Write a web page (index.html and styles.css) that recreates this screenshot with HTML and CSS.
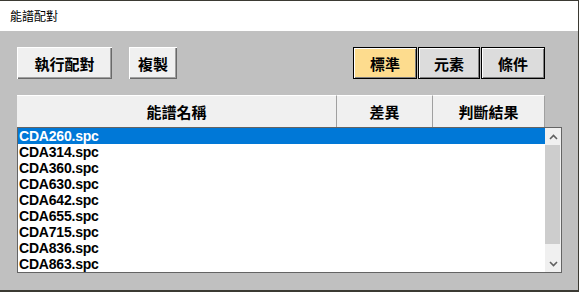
FILE: index.html
```html
<html>
<head>
  <title>能譜配對</title>
  <link rel="stylesheet" href="styles.css">
</head>
<body>
  <div class="window">
    <div class="titlebar">能譜配對</div>
    <div class="client">
      <div class="toolbar">
        <button class="btn btn-run">執行配對</button>
        <button class="btn btn-copy">複製</button>
        <div class="mode-group">
          <button class="mode mode-active">標準</button>
          <button class="mode mode-elem">元素</button>
          <button class="mode">條件</button>
        </div>
      </div>

      <div class="grid-header">
        <div class="col col-name">能譜名稱</div>
        <div class="col col-diff">差異</div>
        <div class="col col-result">判斷結果</div>
      </div>

      <div class="list">
        <div class="rows">
          <div class="row selected">CDA260.spc</div>
          <div class="row">CDA314.spc</div>
          <div class="row">CDA360.spc</div>
          <div class="row">CDA630.spc</div>
          <div class="row">CDA642.spc</div>
          <div class="row">CDA655.spc</div>
          <div class="row">CDA715.spc</div>
          <div class="row">CDA836.spc</div>
          <div class="row">CDA863.spc</div>
        </div>
        <div class="scrollbar">
          <div class="arrow">
            <svg width="9" height="6" viewBox="0 0 9 6"><path d="M1 5 L4.5 1.5 L8 5" fill="none" stroke="#606060" stroke-width="1.6"/></svg>
          </div>
          <div class="thumb"></div>
          <div class="track"></div>
          <div class="arrow">
            <svg width="9" height="6" viewBox="0 0 9 6"><path d="M1 1 L4.5 4.5 L8 1" fill="none" stroke="#606060" stroke-width="1.6"/></svg>
          </div>
        </div>
      </div>
    </div>
  </div>
</body>
</html>
```

FILE: styles.css
```css
body {
  margin: 0;
  background-color: #3b3a33;
  width: 579px;
  height: 292px;
  overflow: hidden;
}

.window {
  margin-top: 1px;
  width: 578px;
  height: 289px;
  display: flex;
  flex-direction: column;
}

.titlebar {
  height: 30px;
  line-height: 29px;
  padding-left: 10px;
  background-color: #ffffff;
  font-family: "Noto Sans CJK TC", sans-serif;
  font-size: 12px;
  color: #000000;
}

.client {
  flex: 1;
  background-color: #c0c0c0;
  padding: 16px 0 0 17px;
}

.toolbar {
  display: flex;
  width: 528px;
  height: 32px;
}

button {
  font-family: "Noto Sans CJK TC", sans-serif;
  font-weight: bold;
  font-size: 15px;
  color: #000000;
  padding: 0;
  margin: 0;
}

.btn {
  height: 32px;
  background-color: #f0f0f0;
  border: none;
  box-shadow: inset 1px 1px #ffffff, inset -1px -1px #696969, inset -2px -2px #a0a0a0;
}

.btn-run {
  width: 95px;
}

.btn-copy {
  width: 48px;
  margin-left: 17px;
}

.mode-group {
  display: flex;
  margin-left: auto;
  gap: 1px;
}

.mode {
  height: 32px;
  width: 64px;
  background-color: #dcdcdc;
  border: 1px solid #000000;
  box-shadow: inset 1px 1px #ffffff, inset -1px -1px #808080;
}

.mode-active {
  background-color: #fddc8e;
}

.mode-elem {
  width: 62px;
}

.grid-header {
  display: flex;
  width: 528px;
  height: 32px;
  margin-top: 16px;
  font-family: "Noto Sans CJK TC", sans-serif;
  font-weight: bold;
  font-size: 15px;
}

.col {
  background-color: #f0f0f0;
  border-right: 1px solid #a0a0a0;
  border-top: 1px solid #ffffff;
  display: flex;
  align-items: center;
  justify-content: center;
}

.col-name {
  width: 319px;
}

.col-diff {
  width: 95px;
}

.col-result {
  width: 111px;
}

.list {
  display: flex;
  width: 543px;
  height: 144px;
  border: 1px solid #646464;
  background-color: #ffffff;
}

.rows {
  flex: 1;
}

.row {
  height: 16px;
  line-height: 16px;
  padding-left: 1px;
  font-family: "Liberation Sans", Arial, sans-serif;
  font-weight: bold;
  font-size: 14px;
  letter-spacing: -0.2px;
  color: #000000;
}

.row.selected {
  background-color: #0078d7;
  color: #ffffff;
}

.scrollbar {
  width: 16px;
  display: flex;
  flex-direction: column;
  background-color: #f0f0f0;
}

.arrow {
  height: 17px;
  display: flex;
  align-items: center;
  justify-content: center;
}

.thumb {
  height: 99px;
  margin: 0 1px 0 0;
  background-color: #cdcdcd;
}

.track {
  flex: 1;
}
```
